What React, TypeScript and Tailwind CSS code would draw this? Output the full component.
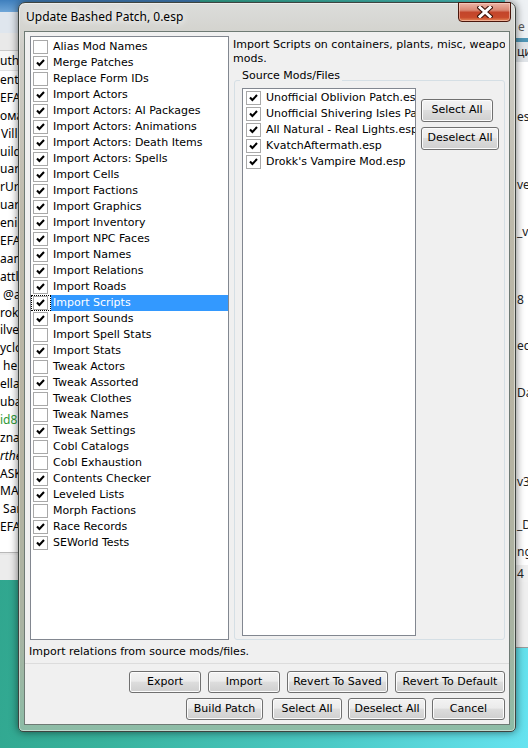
import React from "react";

type Item = { label: string; on: boolean };

const patchers: Item[] = [
  { label: "Alias Mod Names", on: false },
  { label: "Merge Patches", on: true },
  { label: "Replace Form IDs", on: false },
  { label: "Import Actors", on: true },
  { label: "Import Actors: AI Packages", on: true },
  { label: "Import Actors: Animations", on: true },
  { label: "Import Actors: Death Items", on: true },
  { label: "Import Actors: Spells", on: true },
  { label: "Import Cells", on: true },
  { label: "Import Factions", on: true },
  { label: "Import Graphics", on: true },
  { label: "Import Inventory", on: true },
  { label: "Import NPC Faces", on: true },
  { label: "Import Names", on: true },
  { label: "Import Relations", on: true },
  { label: "Import Roads", on: true },
  { label: "Import Scripts", on: true },
  { label: "Import Sounds", on: true },
  { label: "Import Spell Stats", on: false },
  { label: "Import Stats", on: true },
  { label: "Tweak Actors", on: false },
  { label: "Tweak Assorted", on: true },
  { label: "Tweak Clothes", on: false },
  { label: "Tweak Names", on: false },
  { label: "Tweak Settings", on: true },
  { label: "Cobl Catalogs", on: false },
  { label: "Cobl Exhaustion", on: false },
  { label: "Contents Checker", on: true },
  { label: "Leveled Lists", on: true },
  { label: "Morph Factions", on: false },
  { label: "Race Records", on: true },
  { label: "SEWorld Tests", on: true },
];

const sources = [
  "Unofficial Oblivion Patch.esp",
  "Unofficial Shivering Isles Patch.esp",
  "All Natural - Real Lights.esp",
  "KvatchAftermath.esp",
  "Drokk's Vampire Mod.esp",
];

const SELECTED = "Import Scripts";

// rows of the mod list peeking out behind the dialog
const backRows: { t: string; cls: string }[] = [
  { t: "ent", cls: "" },
  { t: "EFAULT", cls: "" },
  { t: "ома", cls: "" },
  { t: "Villiam", cls: "pl-[1px]" },
  { t: "uild", cls: "" },
  { t: "uard", cls: "" },
  { t: "rUrl", cls: "" },
  { t: "uard", cls: "" },
  { t: "enir", cls: "" },
  { t: "EFAULT", cls: "" },
  { t: "aan", cls: "" },
  { t: "attle", cls: "" },
  { t: " @al", cls: "" },
  { t: "roks", cls: "" },
  { t: "ilver", cls: "" },
  { t: "yclo", cls: "" },
  { t: " he", cls: "" },
  { t: "ella", cls: "" },
  { t: "uba", cls: "" },
  { t: "id8", cls: "text-[#2e9a36]" },
  { t: "zna", cls: "" },
  { t: "rthe", cls: "italic" },
  { t: "ASK", cls: "" },
  { t: "MA", cls: "" },
  { t: " Sar", cls: "" },
  { t: "EFAULT", cls: "" },
];

function Check({ on }: { on: boolean }) {
  return (
    <span className="flex h-[14px] w-[15px] shrink-0 items-center justify-center border border-[#a9a9a9] bg-white">
      {on && (
        <svg width="9" height="8" viewBox="0 0 9 8" className="block">
          <path d="M1 3.4 3.4 5.9 8 1.1" fill="none" stroke="#000" strokeWidth="2.1" />
        </svg>
      )}
    </span>
  );
}

function PatchRow({ item, selected }: { item: Item; selected: boolean }) {
  return (
    <div className="flex h-[16px]">
      <div
        className={
          selected
            ? "flex w-[20px] shrink-0 items-center border border-dotted border-black pl-[1px]"
            : "flex w-[20px] shrink-0 items-center border border-transparent pl-[1px]"
        }
      >
        <Check on={item.on} />
      </div>
      <div
        className={
          selected
            ? "min-w-0 flex-1 overflow-hidden whitespace-nowrap bg-[#3399ff] pl-[2px] leading-[16px] text-white"
            : "min-w-0 flex-1 overflow-hidden whitespace-nowrap pl-[2px] leading-[16px]"
        }
      >
        {item.label}
      </div>
    </div>
  );
}

function Btn({ children, cls }: { children: React.ReactNode; cls: string }) {
  return (
    <button
      className={
        "flex h-[22px] shrink-0 items-center justify-center whitespace-nowrap rounded-[3px] border border-[#707070] bg-[linear-gradient(#f3f3f3_0%,#ebebeb_46%,#dddddd_50%,#cfcfcf_100%)] text-[11px] text-black shadow-[inset_0_0_0_1px_#fcfcfc] " +
        cls
      }
    >
      {children}
    </button>
  );
}

function CloseGlyph() {
  return (
    <svg width="16" height="12" viewBox="0 0 16 12">
      <path d="M3 1.5 13 10.5 M13 1.5 3 10.5" stroke="#3c1208" strokeWidth="5" strokeLinecap="square" fill="none" />
      <path d="M3 1.5 13 10.5 M13 1.5 3 10.5" stroke="#ffffff" strokeWidth="3" strokeLinecap="square" fill="none" />
    </svg>
  );
}

export default function App() {
  const ui = "font-['DejaVu_Sans',sans-serif] text-[11px] text-black";
  return (
    <div className="relative h-[748px] w-[528px] overflow-hidden bg-[linear-gradient(100deg,#2a9d84_0%,#38b29c_35%,#4ccac6_70%,#66e3f0_100%)] font-['Noto_Sans',sans-serif]">
      {/* mod list window behind, left */}
      <div className="absolute left-0 top-0 flex h-[580px] w-[200px] flex-col bg-white text-[12px] text-black">
        <div className="h-[12px] bg-[linear-gradient(#3f7fbd,#6fa6d8)]" />
        <div className="h-[21px] bg-[#dfe6ee]" />
        <div className="h-[18px] border-b border-[#c9c9c9] bg-[#e9e9e9]" />
        <div className="h-[20px] border-b border-[#e2e2e2] bg-[#f6f6f6] pl-0 leading-[20px]">uthor</div>
        <div className="flex flex-col">
          {backRows.map((r, i) => (
            <div key={i} className={"h-[17.9px] whitespace-pre leading-[18px] " + r.cls}>
              {r.t}
            </div>
          ))}
        </div>
        <div className="flex-1" />
        <div className="h-[3px] border-t border-[#b8b8b8] bg-[#e6e6e6]" />
        <div className="h-[25px] bg-[#ececec]" />
      </div>

      {/* window behind, right */}
      <div className="absolute left-[505px] top-0 flex h-[648px] w-[60px] flex-col border-b border-[#9a9a9a] bg-white pl-[12px] text-[12px] text-[#222]">
        <div className="-ml-[12px] h-[38px] bg-[#eef1f4] pl-[13px] pt-[19px] leading-[16px] text-[#555]">e</div>
        <div className="-ml-[12px] h-[4px] bg-[#4f95b5]" />
        <div className="-ml-[12px] h-[20px] bg-[#e0e4e8] pl-[12px] leading-[20px]">ци</div>
        <div className="mt-[47px] h-[16px] leading-[16px]">es</div>
        <div className="mt-[52px] h-[16px] leading-[16px]">ve</div>
        <div className="mt-[31px] h-[16px] leading-[16px]">_v</div>
        <div className="mt-[52px] h-[16px] leading-[16px]">8</div>
        <div className="mt-[30px] h-[16px] leading-[16px]">ec</div>
        <div className="mt-[31px] h-[16px] leading-[16px]">Da</div>
        <div className="mt-[73px] h-[16px] leading-[16px]">v3</div>
        <div className="mt-[27px] h-[16px] leading-[16px]">_D</div>
        <div className="mt-[11px] h-[16px] leading-[16px]">ng</div>
        <div className="-ml-[12px] mt-[5px] h-[17px] bg-[#f0f0f0] pl-[12px] leading-[17px]">4</div>
        <div className="-ml-[12px] flex-1 bg-[#efefef]" />
      </div>

      {/* Update Bashed Patch dialog */}
      <div className="absolute left-[18px] top-[2px] flex h-[730px] w-[498px] flex-col rounded-t-[7px] rounded-b-[5px] border border-[#3e4440] bg-[linear-gradient(#dcdddb_0%,#cfcec8_6%,#bdb9aa_30%,#b6b3a2_62%,#a9b3a2_86%,#8cbca6_100%)] px-[5px] pb-[6px] shadow-[0_0_9px_rgba(0,0,0,0.55),inset_0_0_0_1px_rgba(255,255,255,0.45)]">
        <div className="relative flex h-[28px] shrink-0 items-center pl-[2px]">
          <span className="whitespace-nowrap font-['Noto_Sans',sans-serif] text-[12px] text-black [text-shadow:0_0_6px_#ffffff,0_0_10px_#ffffff]">
            Update Bashed Patch, 0.esp
          </span>
          <div className="absolute -top-[1px] right-[-1px] flex h-[20px] w-[53px] items-center justify-center rounded-b-[4px] border border-[#4a160c] bg-[linear-gradient(#ecb5a6_0%,#d98873_40%,#c3452b_52%,#c84a2c_80%,#e58a5a_100%)] shadow-[inset_0_0_0_1px_rgba(255,220,210,0.5)]">
            <CloseGlyph />
          </div>
        </div>

        <div className={"flex flex-1 flex-col border border-[#6e7a74] bg-[#f0f0f0] " + ui}>
          {/* patchers and their options */}
          <div className="ml-[5px] mr-[4px] mt-[4px] flex h-[604px] shrink-0">
            <div className="flex w-[199px] shrink-0 flex-col overflow-hidden border border-[#828790] bg-white pt-[2px]">
              {patchers.map((p) => (
                <PatchRow key={p.label} item={p} selected={p.label === SELECTED} />
              ))}
            </div>

            <div className="ml-[4px] flex min-w-0 flex-1 flex-col">
              <div className="mt-[2px] overflow-hidden whitespace-nowrap leading-[14px]">
                <div className="overflow-hidden">Import Scripts on containers, plants, misc, weapons</div>
                <div>mods.</div>
              </div>

              <div className="relative ml-[1px] mt-[14px] flex flex-1 rounded-[3px] border border-[#d5dfe5] pb-[3px] pl-[7px] pt-[7px]">
                <span className="absolute -top-[12px] left-[5px] bg-[#f0f0f0] px-[2px] leading-[14px]">Source Mods/Files</span>
                <div className="flex w-[174px] shrink-0 flex-col overflow-hidden border border-[#828790] bg-white pt-[1px]">
                  {sources.map((s) => (
                    <div key={s} className="flex h-[16px]">
                      <div className="flex w-[21px] shrink-0 items-center pl-[3px]">
                        <Check on />
                      </div>
                      <div className="min-w-0 flex-1 overflow-hidden whitespace-nowrap pl-[2px] leading-[16px]">{s}</div>
                    </div>
                  ))}
                </div>
                <div className="ml-[5px] mt-[11px] flex flex-col gap-[5px]">
                  <Btn cls="h-[23px] w-[72px]">Select All</Btn>
                  <Btn cls="h-[23px] w-[78px]">Deselect All</Btn>
                </div>
              </div>
            </div>
          </div>

          <div className="mt-[5px] pl-[4px] leading-[14px]">Import relations from source mods/files.</div>

          <div className="mt-[4px] flex flex-col border-t border-[#dcdcdc] pb-[4px] pr-[4px] pt-[7px]">
            <div className="flex justify-end gap-[7px]">
              <Btn cls="w-[72px]">Export</Btn>
              <Btn cls="w-[72px]">Import</Btn>
              <Btn cls="w-[101px]">Revert To Saved</Btn>
              <Btn cls="w-[110px]">Revert To Default</Btn>
            </div>
            <div className="mt-[5px] flex justify-end">
              <Btn cls="w-[77px]">Build Patch</Btn>
              <Btn cls="ml-[9px] w-[70px]">Select All</Btn>
              <Btn cls="ml-[6px] w-[78px]">Deselect All</Btn>
              <Btn cls="ml-[6px] w-[73px]">Cancel</Btn>
            </div>
          </div>
        </div>
      </div>
    </div>
  );
}
